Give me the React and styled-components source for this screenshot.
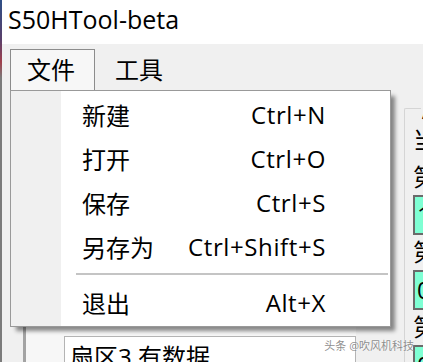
import React from 'react';
import styled, { createGlobalStyle } from 'styled-components';

const GlobalStyle = createGlobalStyle`
  html, body {
    margin: 0;
    padding: 0;
    background: #f0f0f0;
    overflow: hidden;
  }
  body {
    font-family: "Open Sans", "Noto Sans CJK SC", sans-serif;
    color: #000;
  }
`;

const Window = styled.div`
  display: flex;
  width: 423px;
  height: 362px;
  overflow: hidden;
`;

const DesktopEdge = styled.div`
  width: 2px;
  flex-shrink: 0;
  background: linear-gradient(to bottom, #2f4f86 0, #5a3f6a 40px, #a0404c 62px, #7b7b7b 78px, #7b7b7b 100%);
`;

const Main = styled.div`
  position: relative;
  flex: 1;
  display: flex;
  flex-direction: column;
  min-width: 0;
`;

const TitleBar = styled.div`
  height: 44px;
  flex-shrink: 0;
  background: #fff;
  padding-left: 6px;
  display: flex;
  align-items: flex-start;
`;

const Title = styled.div`
  font-size: 25px;
  line-height: 38px;
  white-space: nowrap;
`;

const MenuBar = styled.div`
  height: 46px;
  flex-shrink: 0;
  display: flex;
  align-items: flex-end;
  padding-left: 8px;
  background: #f0f0f0;
`;

const MenuTab = styled.div`
  height: 41px;
  box-sizing: border-box;
  padding: 0 19px 0 ${p => (p.$open ? 16 : 19)}px;
  font-size: 24px;
  line-height: 40px;
  border: 1px solid ${p => (p.$open ? '#8c8c8c' : 'transparent')};
  border-bottom: none;
  background: ${p => (p.$open ? '#f7f7f7' : 'transparent')};
`;

const Client = styled.div`
  flex: 1;
  display: flex;
  min-height: 0;
`;

const LeftPane = styled.div`
  margin-left: 21px;
  width: 333px;
  box-sizing: border-box;
  flex-shrink: 0;
  border-left: 3px solid #a3a3a3;
  background: #f7f7f7;
  padding: 246px 0 0 38px;
`;

const ListBox = styled.div`
  height: 60px;
  background: #fff;
  border: 1px solid #b4b4b4;
  padding: 6px 0 0 5px;
  font-size: 24px;
  line-height: 28px;
  white-space: nowrap;
`;

const RightPane = styled.div`
  flex: 1;
  padding-left: 48px;
  min-width: 0;
`;

const GroupBox = styled.fieldset`
  margin: 6px 0 0 0;
  padding: 0 0 0 8px;
  border: 1px solid #d5d5d5;
  border-right: none;
  border-bottom: none;
  border-radius: 2px 0 0 0;
  min-width: 0;
  height: 300px;
  box-sizing: border-box;
`;

const Legend = styled.legend`
  padding: 0;
  margin-left: 8px;
  font-size: 24px;
  line-height: 24px;
  white-space: nowrap;
`;

const Label = styled.div`
  height: ${p => p.$h || 33}px;
  font-size: 24px;
  line-height: ${p => p.$h || 33}px;
  white-space: nowrap;
`;

const ValueBox = styled.div`
  margin-top: 2px;
  height: 40px;
  box-sizing: border-box;
  width: 200px;
  background: #7fffd4;
  border: 2px solid #6a6a6a;
  padding-left: 2px;
  font-size: 24px;
  line-height: 36px;
`;

const Dropdown = styled.div`
  position: absolute;
  left: 8px;
  top: 90px;
  width: 381px;
  box-sizing: border-box;
  border: 1px solid #999;
  background: linear-gradient(to right, #f0f0f0 0, #f0f0f0 50px, #fff 50px);
  padding: 1px 0 2px 0;
  box-shadow: 5px 5px 4px -1px rgba(0, 0, 0, 0.45);
`;

const MenuItem = styled.div`
  height: 44px;
  display: flex;
  align-items: center;
  justify-content: space-between;
  padding: 0 64px 0 71px;
  font-size: 24px;
  white-space: nowrap;
`;

const Shortcut = styled.span`
  letter-spacing: 0.6px;
`;

const Separator = styled.div`
  height: 12px;
  display: flex;
  align-items: center;
  padding: 0 2px 0 65px;

  &::after {
    content: '';
    flex: 1;
    height: 2px;
    background: #c4c4c4;
  }
`;

const Watermark = styled.div`
  position: absolute;
  right: 9px;
  bottom: 9px;
  font-size: 11px;
  color: rgba(120, 120, 120, 0.85);
  text-shadow: 0 0 2px rgba(255, 255, 255, 0.9);
  white-space: nowrap;
`;

const items = [
  { label: '新建', key: 'Ctrl+N' },
  { label: '打开', key: 'Ctrl+O' },
  { label: '保存', key: 'Ctrl+S' },
  { label: '另存为', key: 'Ctrl+Shift+S' },
];

const fields = ['1', '0', '0'];

const App = () => (
  <>
    <GlobalStyle />
    <Window>
      <DesktopEdge />
      <Main>
        <TitleBar>
          <Title>S50HTool-beta</Title>
        </TitleBar>
        <MenuBar>
          <MenuTab $open>文件</MenuTab>
          <MenuTab>工具</MenuTab>
        </MenuBar>
        <Client>
          <LeftPane>
            <ListBox>扇区3 有数据</ListBox>
          </LeftPane>
          <RightPane>
            <GroupBox>
              <Legend>扇区信息</Legend>
              <Label $h={40}>当前扇区</Label>
              {fields.map((v, i) => (
                <React.Fragment key={i}>
                  <Label>第{i + 1}块</Label>
                  <ValueBox>{v}</ValueBox>
                </React.Fragment>
              ))}
            </GroupBox>
          </RightPane>
        </Client>
        <Dropdown>
          {items.map(({ label, key }) => (
            <MenuItem key={label}>
              <span>{label}</span>
              <Shortcut>{key}</Shortcut>
            </MenuItem>
          ))}
          <Separator />
          <MenuItem>
            <span>退出</span>
            <Shortcut>Alt+X</Shortcut>
          </MenuItem>
        </Dropdown>
        <Watermark>头条 @吹风机科技</Watermark>
      </Main>
    </Window>
  </>
);

export default App;
